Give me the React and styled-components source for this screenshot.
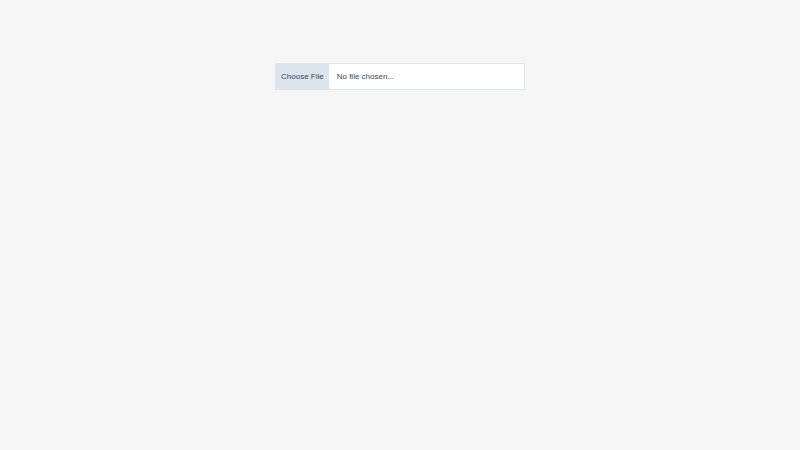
import { useState } from 'react';
import styled, { createGlobalStyle } from 'styled-components';

const colors = {
  page: '#f5f5f5',
  field: '#ffffff',
  border: '#dce4ec',
  text: '#34495e',
};

const GlobalStyle = createGlobalStyle`
  * {
    box-sizing: border-box;
  }

  body {
    margin: 0;
    background: ${colors.page};
    color: ${colors.text};
    font-family: 'Liberation Sans', Arial, sans-serif;
    font-size: 8px;
  }
`;

const Page = styled.main`
  display: flex;
  justify-content: center;
  padding: 63px 16px;
`;

const FileUpload = styled.label`
  position: relative;
  display: flex;
  width: 100%;
  max-width: 250px;
  border: 1px solid ${colors.border};
  background: ${colors.field};
  line-height: 25px;
  cursor: pointer;
  transition: border-color 0.2s ease-in;

  &:hover,
  &:focus-within {
    border-color: ${colors.text};
  }
`;

const FileButton = styled.span`
  flex: none;
  padding: 0 5px;
  background: ${colors.border};
`;

const FileName = styled.span`
  flex: 1;
  min-width: 0;
  padding: 0 8px;
  overflow: hidden;
  text-overflow: ellipsis;
  white-space: nowrap;
`;

// Covers the whole field so a click or a drop anywhere picks a file
const FileInput = styled.input`
  position: absolute;
  inset: 0;
  width: 100%;
  height: 100%;
  opacity: 0;
  cursor: pointer;
`;

const App = () => {
  const [fileName, setFileName] = useState('');

  const handleChange = (e) => {
    const file = e.target.files[0];
    setFileName(file ? file.name : '');
  };

  return (
    <>
      <GlobalStyle />
      <Page>
        <FileUpload htmlFor="chooseFile">
          <FileButton>Choose File</FileButton>
          <FileName>{fileName || 'No file chosen...'}</FileName>
          <FileInput type="file" name="chooseFile" id="chooseFile" onChange={handleChange} />
        </FileUpload>
      </Page>
    </>
  );
};

export default App;
